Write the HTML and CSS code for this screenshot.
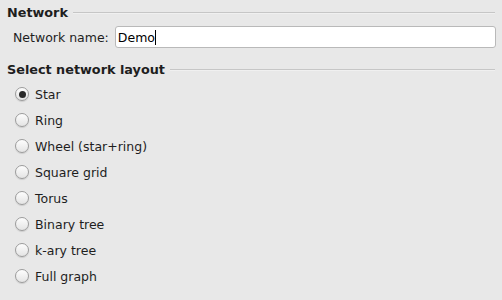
FILE: index.html
```html
<!DOCTYPE html>
<html lang="en">
<head>
  <meta charset="UTF-8" />
  <title>New network</title>
  <link rel="stylesheet" href="styles.css">
</head>
<body>
  <!-- Network name -->
  <div class="group">
    <div class="group-title">
      <span>Network</span>
      <div class="rule"></div>
    </div>
    <div class="field-row">
      <label>Network name:</label>
      <div class="text-field"><span>Demo</span><span class="caret"></span></div>
    </div>
  </div>

  <!-- Layout choice -->
  <div class="group layout-group">
    <div class="group-title">
      <span>Select network layout</span>
      <div class="rule"></div>
    </div>
    <ul class="radio-list">
      <li><input type="radio" name="layout" checked><span>Star</span></li>
      <li><input type="radio" name="layout"><span>Ring</span></li>
      <li><input type="radio" name="layout"><span>Wheel (star+ring)</span></li>
      <li><input type="radio" name="layout"><span>Square grid</span></li>
      <li><input type="radio" name="layout"><span>Torus</span></li>
      <li><input type="radio" name="layout"><span>Binary tree</span></li>
      <li><input type="radio" name="layout"><span>k-ary tree</span></li>
      <li><input type="radio" name="layout"><span>Full graph</span></li>
    </ul>
  </div>
</body>
</html>
```

FILE: styles.css
```css
body {
  margin: 0;
  background-color: #e8e8e8;
  color: #1e1e1e;
  font-family: 'DejaVu Sans', sans-serif;
  font-size: 12.5px;
}

/* Group boxes */
.group-title {
  display: flex;
  align-items: center;
  gap: 5px;
  height: 14px;
  margin-top: 6px;
  padding-left: 7px;
  padding-right: 7px;
  font-size: 12.8px;
  font-weight: bold;
  line-height: 14px;
}

.rule {
  flex: 1;
  height: 1px;
  background-color: #c6c6c6;
  border-bottom: 1px solid #f0f0f0;
}

.layout-group .group-title {
  margin-top: 15px;
}

/* Name row */
.field-row {
  display: flex;
  align-items: center;
  gap: 6px;
  margin-top: 6px;
  padding-left: 13px;
  padding-right: 6px;
}

.text-field {
  flex: 1;
  height: 20px;
  display: flex;
  align-items: center;
  padding-left: 2px;
  background-color: #fff;
  border: 1px solid #b9b9b9;
  border-radius: 3px;
  color: #000;
}

.caret {
  width: 1px;
  height: 15px;
  background-color: #000;
}

/* Radio list */
.radio-list {
  list-style: none;
  margin: 4px 0 0;
  padding: 0 0 0 15px;
}

.radio-list li {
  display: flex;
  align-items: center;
  gap: 6px;
  height: 26px;
}

.radio-list input {
  appearance: none;
  -webkit-appearance: none;
  margin: 0;
  width: 14px;
  height: 14px;
  border: 1px solid #9c9c9c;
  border-radius: 50%;
  background: linear-gradient(#fdfdfd, #e4e4e4);
  box-shadow: 0 1px 1px rgba(0, 0, 0, 0.12);
  box-sizing: border-box;
  display: flex;
  align-items: center;
  justify-content: center;
}

.radio-list input:checked::after {
  content: "";
  width: 7px;
  height: 7px;
  border-radius: 50%;
  background-color: #2a2a2a;
}
```
